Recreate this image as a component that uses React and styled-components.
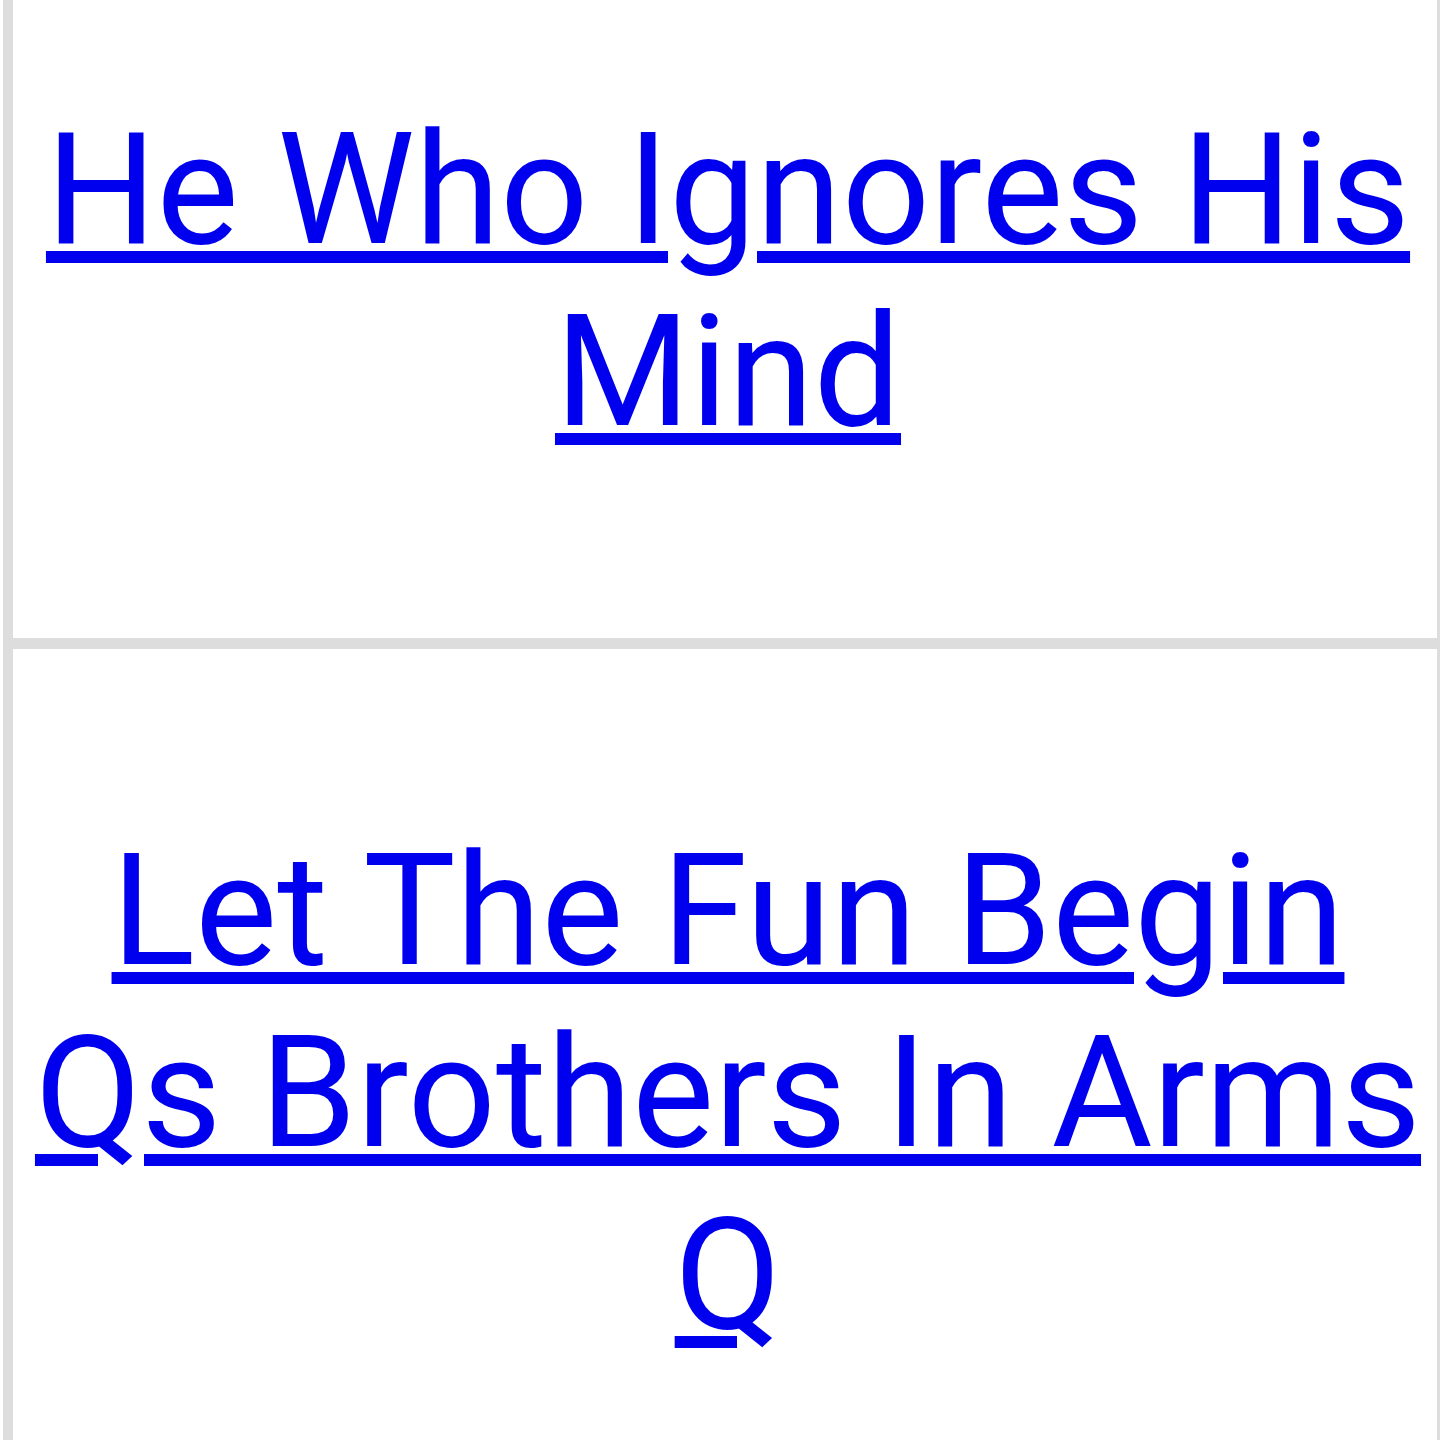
import React from 'react'
import styled, { createGlobalStyle } from 'styled-components';

const GlobalStyle = createGlobalStyle`
  html, body {
    margin: 0;
    padding: 0;
    background: #ffffff;
  }
  body {
    font-family: Roboto, "Liberation Sans", sans-serif;
  }
`;

export const Page = styled.div`
  width: 1440px;
  height: 1440px;
  overflow: hidden;
  padding-left: 3px;
  box-sizing: border-box;
`;

export const PostList = styled.div`
  display: flex;
  flex-direction: column;
  gap: 11px;
  width: 1444px;
  margin-top: -72px;
  padding: 0 10px;
  box-sizing: border-box;
  background: #dddddd;
`;

export const PostCard = styled.article`
  background: #ffffff;
  padding: 171px 0 175px 6px;
  display: flex;
  justify-content: center;
  text-align: center;
`;

export const PostTitle = styled.a`
  color: #0000ee;
  font-size: 155px;
  line-height: 182px;
  font-weight: 400;
  text-decoration: underline;
  text-decoration-thickness: 12px;
  text-underline-offset: 8px;
`;

const posts = [
  { id: 1, title: 'He Who Ignores His Mind' },
  { id: 2, title: 'Let The Fun Begin Qs Brothers In Arms Q' },
];

const App = () => {
    return (
        <>
            <GlobalStyle />
            <Page>
                <PostList>
                    {posts.map((post) => (
                        <PostCard key={post.id}>
                            <PostTitle href="#">{post.title}</PostTitle>
                        </PostCard>
                    ))}
                </PostList>
            </Page>
        </>
    )
}

export default App
